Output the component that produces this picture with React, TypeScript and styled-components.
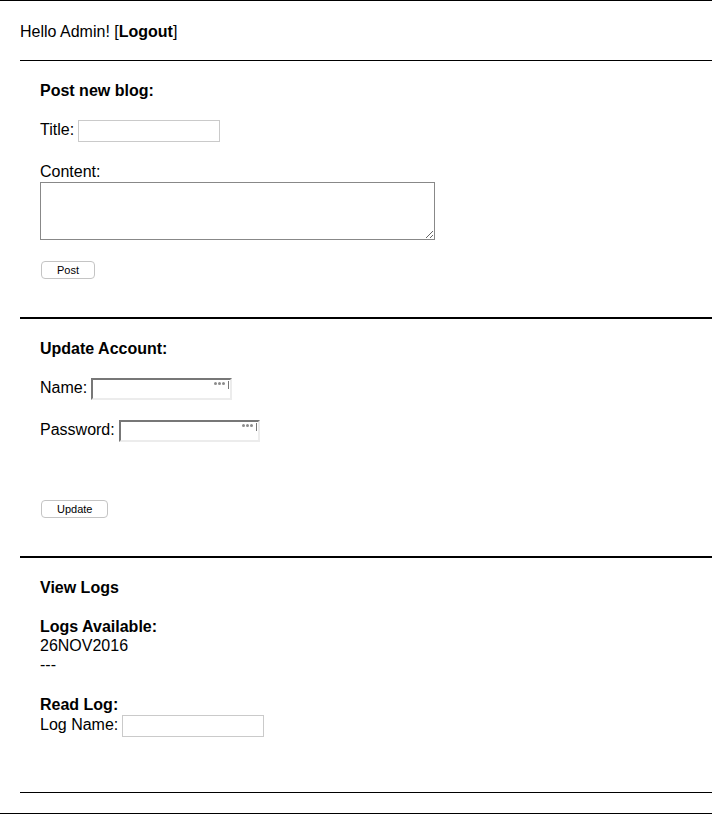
import { createGlobalStyle, styled } from 'styled-components';

const GlobalStyle = createGlobalStyle`
  body {
    margin: 0;
    background: #fff;
    color: #000;
    font-family: 'Liberation Sans', Arial, sans-serif;
    font-size: 16px;
    line-height: 20px;
  }
`;

// little keychain marker that the browser draws in password fields
const KeyDots = () => (
  <Dots>
    <Dot />
    <Dot />
    <Dot />
  </Dots>
);

const App = () => {
  return (
    <Page>
      <GlobalStyle />
      <Container>
        <Header>
          Hello Admin! [<b>Logout</b>]
        </Header>

        <Section $rule={1} $pb={38}>
          <Heading>Post new blog:</Heading>
          <Row $mt={19}>
            <span>Title:</span>
            <TextInput type="text" />
          </Row>
          <Label>Content:</Label>
          <TextArea />
          <Btn type="button" $mt={21}>
            Post
          </Btn>
        </Section>

        <Section $rule={2} $pb={38}>
          <Heading>Update Account:</Heading>
          <Row $mt={19}>
            <span>Name:</span>
            <SecretWrap>
              <SecretInput type="password" />
              <KeyDots />
            </SecretWrap>
          </Row>
          <Row $mt={20}>
            <span>Password:</span>
            <SecretWrap>
              <SecretInput type="password" />
              <KeyDots />
            </SecretWrap>
          </Row>
          <Btn type="button" $mt={58}>
            Update
          </Btn>
        </Section>

        <Section $rule={2} $pb={55} $last>
          <Heading>View Logs</Heading>
          <LogList>
            <b>Logs Available:</b>
            <span>26NOV2016</span>
            <span>---</span>
          </LogList>
          <Heading $mt={21}>Read Log:</Heading>
          <Row $mt={0}>
            <span>Log Name:</span>
            <TextInput type="text" />
          </Row>
        </Section>
        <Footer />
      </Container>
    </Page>
  );
};

const Page = styled.div`
  box-sizing: border-box;
  height: 814px;
  border-top: 1px solid #000;
  border-bottom: 1px solid #000;
`;

const Container = styled.div`
  margin-left: 20px;
`;

const Header = styled.div`
  padding: 21px 0 18px;
  line-height: 20px;
`;

const Section = styled.div<{ $rule: number; $pb: number; $last?: boolean }>`
  border-top: ${p => p.$rule}px solid #000;
  border-bottom: ${p => (p.$last ? '1px solid #000' : 'none')};
  padding: 20px 20px ${p => p.$pb}px;
`;

const Heading = styled.div<{ $mt?: number }>`
  font-weight: 700;
  line-height: 20px;
  margin-top: ${p => p.$mt ?? 0}px;
`;

const Row = styled.div<{ $mt: number }>`
  display: flex;
  align-items: flex-start;
  gap: 4px;
  height: 22px;
  margin-top: ${p => p.$mt}px;
  span {
    line-height: 20px;
  }
`;

const TextInput = styled.input`
  box-sizing: border-box;
  width: 142px;
  height: 22px;
  margin: 0;
  padding: 1px 3px;
  border: 1px solid #cacaca;
  background: #fff;
  font: 13px 'Liberation Sans', Arial, sans-serif;
  outline: none;
`;

const SecretWrap = styled.div`
  position: relative;
  width: 141px;
  height: 22px;
`;

const SecretInput = styled.input`
  box-sizing: border-box;
  width: 100%;
  height: 22px;
  margin: 0;
  padding: 1px 3px;
  border-style: solid;
  border-width: 2px;
  border-color: #777 #ececec #ececec #777;
  background: #fff;
  outline: none;
`;

const Dots = styled.div`
  position: absolute;
  top: 3px;
  right: 3px;
  display: flex;
  align-items: flex-start;
  gap: 1px;
  height: 8px;
  padding-right: 3px;
  border-right: 1px solid #777;
`;

const Dot = styled.span`
  display: block;
  width: 3px;
  height: 3px;
  margin-top: 1px;
  border-radius: 50%;
  background: #8c8c8c;
`;

const Label = styled.div`
  margin-top: 20px;
  line-height: 20px;
`;

const TextArea = styled.textarea`
  display: block;
  box-sizing: border-box;
  width: 395px;
  height: 58px;
  margin: 0;
  padding: 2px;
  border: 1px solid #888;
  background: #fff;
  outline: none;
`;

const Btn = styled.button<{ $mt: number }>`
  display: block;
  box-sizing: border-box;
  height: 18px;
  margin: ${p => p.$mt}px 0 0 1px;
  padding: 0 15px;
  border: 1px solid #c4c4c4;
  border-radius: 4px;
  background: #fff;
  color: #000;
  font: 11px 'Liberation Sans', Arial, sans-serif;
  line-height: 16px;
`;

const LogList = styled.div`
  display: flex;
  flex-direction: column;
  margin-top: 19px;
  line-height: 19px;
`;

const Footer = styled.div`
  height: 20px;
`;

export default App;
